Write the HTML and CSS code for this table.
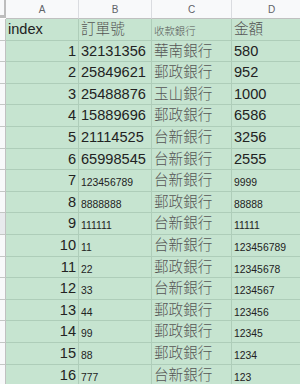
FILE: index.html
```html
<!DOCTYPE html>
<html>
<head>
<meta charset="utf-8">
<link rel="stylesheet" href="styles.css">
</head>
<body>
<div class="sheet">
  <div class="corner"></div>
  <div class="colhead">A</div>
  <div class="colhead">B</div>
  <div class="colhead">C</div>
  <div class="colhead">D</div>

  <div class="rowhead"></div>
  <div class="cell">index</div>
  <div class="cell cjk">訂單號</div>
  <div class="cell cjk small">收款銀行</div>
  <div class="cell cjk">金額</div>

  <div class="rowhead"></div><div class="cell num">1</div><div class="cell">32131356</div><div class="cell cjk">華南銀行</div><div class="cell">580</div>
  <div class="rowhead"></div><div class="cell num">2</div><div class="cell">25849621</div><div class="cell cjk">郵政銀行</div><div class="cell">952</div>
  <div class="rowhead"></div><div class="cell num">3</div><div class="cell">25488876</div><div class="cell cjk">玉山銀行</div><div class="cell">1000</div>
  <div class="rowhead"></div><div class="cell num">4</div><div class="cell">15889696</div><div class="cell cjk">郵政銀行</div><div class="cell">6586</div>
  <div class="rowhead"></div><div class="cell num">5</div><div class="cell">21114525</div><div class="cell cjk">台新銀行</div><div class="cell">3256</div>
  <div class="rowhead"></div><div class="cell num">6</div><div class="cell">65998545</div><div class="cell cjk">台新銀行</div><div class="cell">2555</div>
  <div class="rowhead"></div><div class="cell num">7</div><div class="cell small">123456789</div><div class="cell cjk">台新銀行</div><div class="cell small">9999</div>
  <div class="rowhead"></div><div class="cell num">8</div><div class="cell small">8888888</div><div class="cell cjk">郵政銀行</div><div class="cell small">88888</div>
  <div class="rowhead active"></div><div class="cell num">9</div><div class="cell small">111111</div><div class="cell cjk">台新銀行</div><div class="cell small">11111</div>
  <div class="rowhead"></div><div class="cell num">10</div><div class="cell small">11</div><div class="cell cjk">台新銀行</div><div class="cell small">123456789</div>
  <div class="rowhead"></div><div class="cell num">11</div><div class="cell small">22</div><div class="cell cjk">郵政銀行</div><div class="cell small">12345678</div>
  <div class="rowhead"></div><div class="cell num">12</div><div class="cell small">33</div><div class="cell cjk">台新銀行</div><div class="cell small">1234567</div>
  <div class="rowhead"></div><div class="cell num">13</div><div class="cell small">44</div><div class="cell cjk">郵政銀行</div><div class="cell small">123456</div>
  <div class="rowhead"></div><div class="cell num">14</div><div class="cell small">99</div><div class="cell cjk">郵政銀行</div><div class="cell small">12345</div>
  <div class="rowhead"></div><div class="cell num">15</div><div class="cell small">88</div><div class="cell cjk">郵政銀行</div><div class="cell small">1234</div>
  <div class="rowhead"></div><div class="cell num">16</div><div class="cell small">777</div><div class="cell cjk">台新銀行</div><div class="cell small">123</div>
</div>
</body>
</html>
```

FILE: styles.css
```css
html, body {
  margin: 0;
  padding: 0;
  background: #ffffff;
  overflow: hidden;
}

.sheet {
  display: grid;
  grid-template-columns: 6px 73px 73px 80px 80px;
  grid-template-rows: 19px;
  grid-auto-rows: 21.6px;
  width: 312px;
  font-family: "Liberation Sans", Arial, "Noto Sans CJK TC", sans-serif;
  color: #222222;
}

.sheet > div {
  box-sizing: border-box;
  overflow: hidden;
  white-space: nowrap;
}

.corner {
  background: #f8f9fa;
  border-right: 2px solid #bdbdbd;
  border-bottom: 3px solid #bdbdbd;
  margin-bottom: 1px;
}

.colhead {
  background: #f8f9fa;
  border-right: 1px solid #dadce0;
  border-bottom: 1px solid #c0c0c0;
  color: #5f6368;
  font-size: 10px;
  display: flex;
  align-items: center;
  justify-content: center;
}

.rowhead {
  background: #f8f9fa;
  border-right: 1px solid #c0c0c0;
  border-bottom: 1px solid #c4c7c5;
}

.rowhead.active {
  background: #e8eaed;
}

.cell {
  background: #c6e4d0;
  border-right: 1px solid #aecdb9;
  border-bottom: 1px solid #aecdb9;
  font-size: 14.6px;
  line-height: 17px;
  display: flex;
  align-items: flex-end;
  padding: 0 2px 1.5px 2px;
}

.cell.num {
  justify-content: flex-end;
}

.cell.small {
  font-size: 10.4px;
  line-height: 12px;
}

.cjk {
  font-family: "Liberation Sans", Arial, "Noto Sans CJK TC", sans-serif;
  font-weight: 300;
  color: #555555;
}
```
